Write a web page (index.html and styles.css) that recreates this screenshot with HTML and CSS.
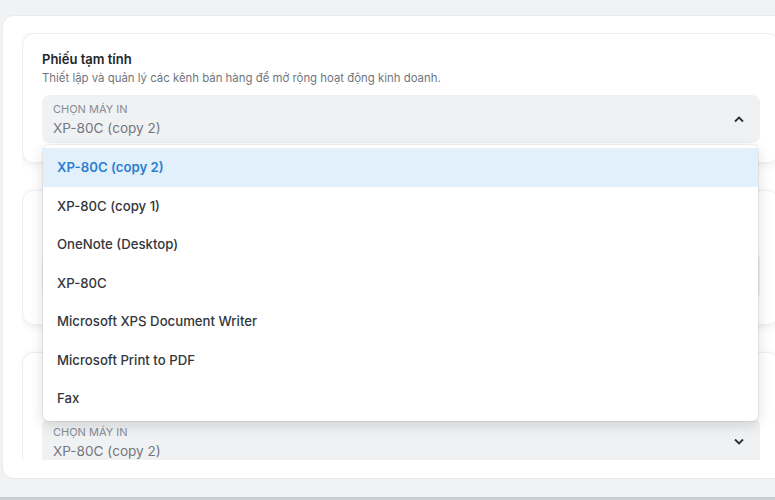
FILE: index.html
```html
<!DOCTYPE html>
<html lang="vi">
<head>
    <meta charset="UTF-8">
    <title>Phiếu tạm tính</title>
    <link rel="stylesheet" href="styles.css">
</head>
<body>
<div class="page">
    <div class="panel">
        <div class="scroll">
            <div class="card">
                <div class="card-title">Phiếu tạm tính</div>
                <div class="card-desc">Thiết lập và quản lý các kênh bán hàng để mở rộng hoạt động kinh doanh.</div>
                <div class="select open">
                    <div class="select-text">
                        <span class="select-label">Chọn máy in</span>
                        <span class="select-value">XP-80C (copy 2)</span>
                    </div>
                    <svg class="chevron" width="12" height="8" viewBox="0 0 12 8"><path d="M2 6.5L6 2.5L10 6.5" fill="none" stroke="#2b2f36" stroke-width="1.8"/></svg>
                    <ul class="menu">
                        <li class="on">XP-80C (copy 2)</li>
                        <li>XP-80C (copy 1)</li>
                        <li>OneNote (Desktop)</li>
                        <li>XP-80C</li>
                        <li>Microsoft XPS Document Writer</li>
                        <li>Microsoft Print to PDF</li>
                        <li>Fax</li>
                    </ul>
                </div>
            </div>
            <!-- covered by the open menu -->
            <div class="card card-tall">
                <div class="card-head"></div>
                <div class="select"></div>
            </div>
            <div class="card">
                <div class="card-head card-head-lg"></div>
                <div class="select">
                    <div class="select-text">
                        <span class="select-label">Chọn máy in</span>
                        <span class="select-value">XP-80C (copy 2)</span>
                    </div>
                    <svg class="chevron" width="12" height="8" viewBox="0 0 12 8"><path d="M2 1.5L6 5.5L10 1.5" fill="none" stroke="#2b2f36" stroke-width="1.8"/></svg>
                </div>
            </div>
        </div>
    </div>
</div>
<div class="footer"></div>
</body>
</html>
```

FILE: styles.css
```css
*{
    margin: 0;
    padding: 0;
    box-sizing: border-box;
    list-style: none;
}
html,body{
    height: 500px;
    overflow: hidden;
}
body{
    display: flex;
    flex-direction: column;
    background: #f1f2f4;
    font-family: Inter, "Noto Sans", sans-serif;
    color: #2b2f36;
}
.page{
    flex: 1;
    width: 800px;
    padding: 15px 0 0 2px;
}
.panel{
    height: 464px;
    padding: 17px 19px 18px 19px;
    background: #fff;
    border: 1px solid #e9eaed;
    border-radius: 12px;
}
.scroll{
    height: 427px;
    overflow: hidden;
    display: flex;
    flex-direction: column;
    gap: 27px;
}
.card{
    flex-shrink: 0;
    padding: 16px 19px 19px 19px;
    background: #fff;
    border: 1px solid #efeff1;
    border-radius: 12px;
    box-shadow: 0 2px 8px rgba(0,0,0,.07);
}
.card-tall{
    padding-bottom: 24px;
}
.card-head{
    height: 36px;
}
.card-head-lg{
    height: 40px;
}
.card-title{
    font-size: 13px;
    font-weight: 600;
    line-height: 18px;
    color: #23262b;
}
.card-desc{
    margin-top: 2px;
    font-size: 11.4px;
    line-height: 16px;
    color: #70757d;
}
.select{
    position: relative;
    display: flex;
    align-items: center;
    height: 48px;
    margin-top: 9px;
    padding: 0 15px 0 11px;
    background: #f0f1f3;
    border-radius: 8px;
}
.select-text{
    flex: 1;
    display: flex;
    flex-direction: column;
}
.select-label{
    font-size: 11px;
    line-height: 14px;
    text-transform: uppercase;
    color: #878c95;
}
.select-value{
    margin-top: 3px;
    font-size: 13.6px;
    line-height: 18px;
    color: #73787f;
}
.chevron{
    display: block;
}
.menu{
    position: absolute;
    z-index: 5;
    top: 50px;
    left: 1px;
    width: 715px;
    padding: 3px 0 3px 0;
    background: #fff;
    border-radius: 6px;
    box-shadow: 0 0 0 1px rgba(0,0,0,.05), 0 4px 14px rgba(0,0,0,.14);
}
.menu li{
    display: flex;
    align-items: center;
    height: 38.5px;
    padding-left: 14px;
    font-size: 13.2px;
    font-weight: 500;
    color: #33363b;
}
.menu li.on{
    background: #e1f0fb;
    color: #2c7fd2;
    font-weight: 600;
}
.footer{
    height: 3px;
    background: #c9cdd4;
}
```
